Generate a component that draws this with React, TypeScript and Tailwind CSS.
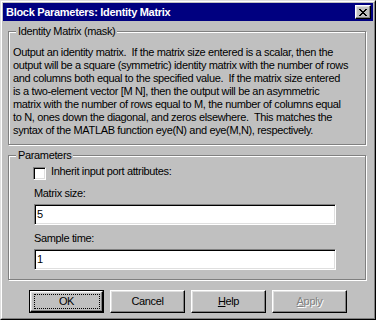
import React from "react";

const lines = [
  "Output an identity matrix.  If the matrix size entered is a scalar, then the",
  "output will be a square (symmetric) identity matrix with the number of rows",
  "and columns both equal to the specified value.  If the matrix size entered",
  "is a two-element vector [M N], then the output will be an asymmetric",
  "matrix with the number of rows equal to M, the number of columns equal",
  "to N, ones down the diagonal, and zeros elsewhere.  This matches the",
  "syntax of the MATLAB function eye(N) and eye(M,N), respectively.",
];

function Btn({ children, isDefault }: { children: React.ReactNode; isDefault?: boolean }) {
  if (isDefault) {
    return (
      <div className="relative w-[75px] h-[23px] border border-black">
        <div className="w-full h-full border border-t-white border-l-white border-r-black border-b-black shadow-[inset_-1px_-1px_0_#808080,inset_1px_1px_0_#dfdfdf] flex items-center justify-center leading-[13px]">
          {children}
        </div>
        <div className="absolute top-[3px] left-[4px] right-[3px] bottom-[3px] border border-dotted border-black" />
      </div>
    );
  }
  return (
    <div className="w-[75px] h-[23px] border border-t-white border-l-white border-r-black border-b-black shadow-[inset_-1px_-1px_0_#808080,inset_1px_1px_0_#dfdfdf] flex items-center justify-center leading-[13px]">
      {children}
    </div>
  );
}

function Field({ value }: { value: string }) {
  return (
    <div className="ml-px w-[302px] h-[21px] bg-white border border-t-[#808080] border-l-[#808080] border-r-white border-b-white shadow-[inset_1px_1px_0_#000,inset_-1px_-1px_0_#dfdfdf] flex items-center pl-[2px] leading-[13px]">
      {value}
    </div>
  );
}

export default function App() {
  return (
    <div className="w-[376px] h-[320px] bg-[#c0c0c0] border border-t-[#dfdfdf] border-l-[#dfdfdf] border-r-black border-b-black font-['Liberation_Sans',Arial,sans-serif] text-[11px] tracking-[-0.35px] text-black leading-[13px]">
      <div className="w-full h-full border border-t-white border-l-white border-r-[#808080] border-b-[#808080] p-px flex flex-col">
        <div className="h-[18px] bg-[#000080] flex items-center justify-between pl-[3px] pr-[2px]">
          <span className="text-white font-bold text-[11px] tracking-[-0.3px] leading-[13px]">Block Parameters: Identity Matrix</span>
          <div className="w-[16px] h-[14px] bg-[#c0c0c0] border border-t-white border-l-white border-r-black border-b-black shadow-[inset_-1px_-1px_0_#808080,inset_1px_1px_0_#dfdfdf] flex items-center justify-center">
            <svg width="8" height="7" viewBox="0 0 8 7" shapeRendering="crispEdges">
              <path d="M0 0h2v1H0zM6 0h2v1H6zM1 1h2v1H1zM5 1h2v1H5zM2 2h4v1H2zM3 3h2v1H3zM2 4h4v1H2zM1 5h2v1H1zM5 5h2v1H5zM0 6h2v1H0zM6 6h2v1H6z" fill="#000" />
            </svg>
          </div>
        </div>

        <div className="relative mt-[10px] ml-[5px] w-[358px] h-[114px] border border-[#808080] shadow-[inset_1px_1px_0_#fff,1px_1px_0_#fff] pt-[14px] pl-[4px]">
          <div className="absolute top-[-7px] left-[7px] px-[2px] bg-[#c0c0c0]">Identity Matrix (mask)</div>
          {lines.map((l, i) => (
            <div key={i} className="whitespace-pre">{l}</div>
          ))}
        </div>

        <div className="relative mt-[10px] ml-[5px] w-[358px] h-[125px] border border-[#808080] shadow-[inset_1px_1px_0_#fff,1px_1px_0_#fff] pt-[9px] pl-[24px] flex flex-col">
          <div className="absolute top-[-7px] left-[7px] px-[2px] bg-[#c0c0c0]">Parameters</div>
          <div className="flex items-start gap-[5px] h-[13px]">
            <div className="mt-[2px] w-[13px] h-[13px] bg-white border border-t-[#808080] border-l-[#808080] border-r-white border-b-white shadow-[inset_1px_1px_0_#000,inset_-1px_-1px_0_#dfdfdf]" />
            <span>Inherit input port attributes:</span>
          </div>
          <div className="ml-px mt-[9px]">Matrix size:</div>
          <div className="mt-[4px]"><Field value="5" /></div>
          <div className="ml-px mt-[7px]">Sample time:</div>
          <div className="mt-[4px]"><Field value="1" /></div>
        </div>

        <div className="mt-[10px] ml-[26px] flex gap-[6px]">
          <Btn isDefault>OK</Btn>
          <Btn>Cancel</Btn>
          <Btn><span><span className="underline">H</span>elp</span></Btn>
          <Btn>
            <span className="text-[#808080] [text-shadow:1px_1px_0_#fff]"><span className="underline">A</span>pply</span>
          </Btn>
        </div>
      </div>
    </div>
  );
}
